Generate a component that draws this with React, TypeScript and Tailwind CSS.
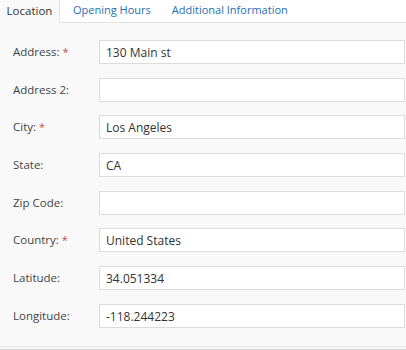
import React from "react";

type Field = {
  label: string;
  value: string;
  required?: boolean;
};

const FIELDS: Field[] = [
  { label: "Address:", value: "130 Main st", required: true },
  { label: "Address 2:", value: "" },
  { label: "City:", value: "Los Angeles", required: true },
  { label: "State:", value: "CA" },
  { label: "Zip Code:", value: "" },
  { label: "Country:", value: "United States", required: true },
  { label: "Latitude:", value: "34.051334" },
  { label: "Longitude:", value: "-118.244223" }
];

const TABS = ["Location", "Opening Hours", "Additional Information"];

export default function App() {
  return (
    <div
      className="h-[350px] w-[406px] overflow-hidden bg-[#f9f9f9] text-[#333]"
      style={{ fontFamily: '"Open Sans", "Noto Sans", sans-serif' }}
    >
      {/* Onglets : le premier est actif (fond de page), les autres sur blanc */}
      <div className="flex h-[23px] items-stretch bg-white">
        {TABS.map((t, i) =>
          i === 0 ? (
            <div
              key={t}
              className="flex w-[60px] items-center justify-center border-r border-[#e3e3e3] bg-[#f9f9f9] pb-[1px] text-[11.5px] text-[#333]"
            >
              {t}
            </div>
          ) : (
            <div
              key={t}
              className="flex items-center border-b border-[#e3e3e3] pb-[1px] pl-[13px] pr-[8px] text-[11px] text-[#1f6fb2]"
            >
              {t}
            </div>
          )
        )}
        <div className="flex-1 border-b border-[#e3e3e3]" />
      </div>

      {/* Formulaire */}
      <div className="flex flex-col gap-[13.7px] pl-[13px] pr-[1px] pt-[17px]">
        {FIELDS.map((f) => (
          <div key={f.label} className="flex items-start">
            <label className="w-[86px] shrink-0 pt-[3px] text-[11.5px] text-[#444]">
              {f.label}
              {f.required ? (
                <span className="ml-[3px] text-[11px] text-[#c0504d]">*</span>
              ) : null}
            </label>
            <input
              readOnly
              value={f.value}
              className="h-[24px] flex-1 border border-[#dcdcdc] bg-white px-[6px] pt-[1px] text-[12px] text-[#333] outline-none"
            />
          </div>
        ))}
      </div>

      <div className="mt-[18px] h-[4px] border-y border-[#e6e6e6] border-b-[#d4d4d4]" />
    </div>
  );
}
